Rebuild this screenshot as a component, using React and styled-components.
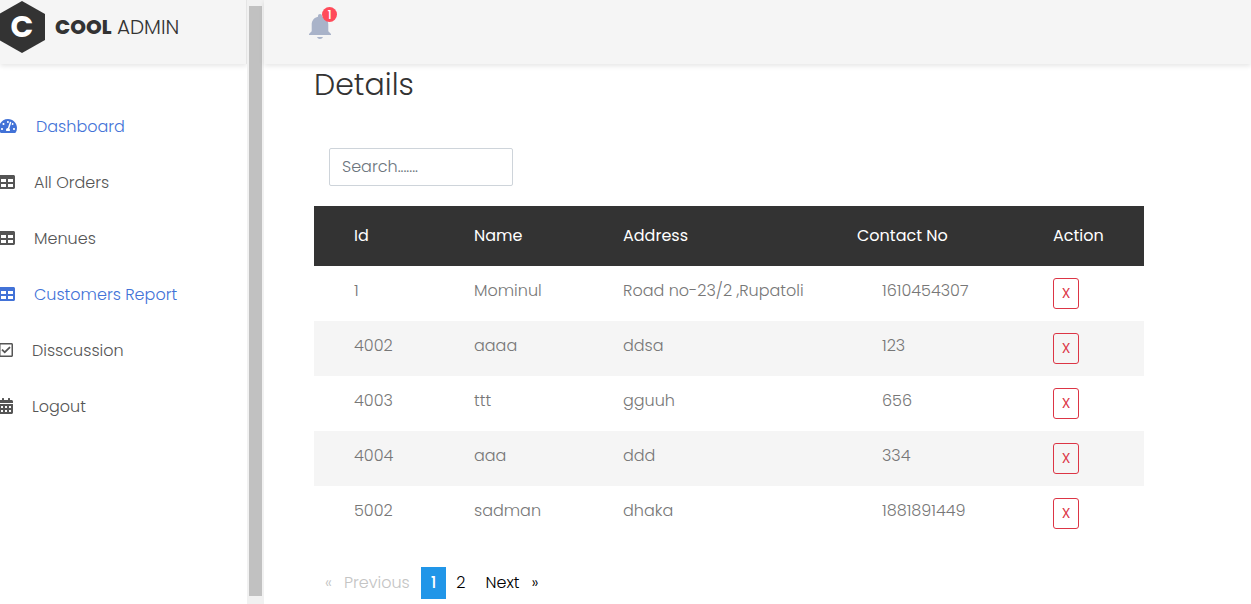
import React, { useState } from "react";
import styled, { createGlobalStyle } from "styled-components";
import { FaTachometerAlt, FaTable, FaRegCheckSquare, FaCalendarAlt } from "react-icons/fa";

const GlobalStyle = createGlobalStyle`
  *, *::before, *::after { box-sizing: border-box; }
  body {
    margin: 0;
    background: #fff;
    color: #333;
    font-family: Poppins, Inter, "Liberation Sans", sans-serif;
    font-size: 16px;
    font-weight: 300;
    line-height: 26px;
  }
  button, input { font: inherit; }
`;

const Page = styled.div`
  display: flex;
  height: 100vh;
  overflow: hidden;
`;

const Sidebar = styled.aside`
  flex: 0 0 247px;
  display: flex;
  flex-direction: column;
`;

const Brand = styled.a`
  display: flex;
  align-items: center;
  gap: 10px;
  height: 64px;
  flex: none;
  padding-bottom: 10px;
  background: #f5f5f5;
  border-right: 1px solid #e5e5e5;
  box-shadow: 0 2px 5px rgba(0, 0, 0, 0.1);
  color: #333;
  text-decoration: none;
`;

const Hexagon = styled.svg`
  display: block;
  width: 45px;
  height: 52px;
`;

const HexagonLetter = styled.text`
  fill: #fff;
  font-size: 30px;
  font-weight: 700;
  text-anchor: middle;
`;

const BrandName = styled.span`
  font-size: 20px;
  line-height: 28px;
  strong { font-weight: 800; }
`;

const Menu = styled.ul`
  display: flex;
  flex-direction: column;
  gap: 30px;
  margin: 0 0 0 -1px;
  padding: 50px 0 0;
  list-style: none;
`;

const MenuLink = styled.a`
  display: flex;
  align-items: center;
  gap: 19px;
  color: ${(p) => (p.$active ? "#4272d7" : "#555")};
  text-decoration: none;
  svg {
    flex: none;
    width: ${(p) => p.$iconWidth}px;
    height: 16px;
    margin-bottom: 2px;
  }
`;

const ScrollTrack = styled.div`
  flex: 0 0 17px;
  padding: 6px 2px 8px;
  background: #f1f1f1;
`;

const ScrollThumb = styled.div`
  height: 100%;
  background: #c1c1c1;
`;

const Content = styled.div`
  flex: 1;
  min-width: 0;
`;

const Header = styled.header`
  display: flex;
  align-items: flex-start;
  height: 64px;
  padding: 12px 44px;
  background: #f5f5f5;
  box-shadow: 0 2px 5px rgba(0, 0, 0, 0.1);
`;

const BellButton = styled.button`
  position: relative;
  padding: 0;
  border: 0;
  background: none;
  color: #a9b3c9;
  svg { display: block; width: 24px; height: 28px; }
`;

const Badge = styled.span`
  position: absolute;
  top: -5px;
  right: -5px;
  width: 15px;
  height: 15px;
  border-radius: 50%;
  background: #ff4b5a;
  color: #fff;
  font-size: 12px;
  font-weight: 500;
  line-height: 16px;
  text-align: center;
`;

const Main = styled.main`
  padding: 0 107px 0 50px;
`;

const Title = styled.h2`
  margin: 0;
  font-size: 30px;
  font-weight: 300;
  line-height: 42px;
`;

const SearchInput = styled.input`
  display: block;
  width: 184px;
  height: 38px;
  margin: 42px 15px 20px;
  padding: 5px 12px 7px;
  border: 1px solid #ced4da;
  border-radius: 2px;
  background: #fff;
  line-height: 24px;
  &::placeholder { color: #6c757d; opacity: 1; }
`;

const DataTable = styled.table`
  width: 100%;
  table-layout: fixed;
  border-collapse: collapse;
  text-align: left;
`;

const HeadCell = styled.th`
  height: 60px;
  padding: 0;
  background: #333;
  color: #fff;
  font-weight: 400;
  white-space: nowrap;
  &:first-child { padding-left: 40px; }
`;

const Row = styled.tr`
  &:nth-child(even) { background: #f5f5f5; }
`;

const Cell = styled.td`
  height: 55px;
  padding: 12px 0 12px ${(p) => (p.$indent ? "25px" : "0")};
  color: #777;
  vertical-align: top;
  white-space: nowrap;
  &:first-child { padding-left: 40px; }
`;

const DeleteButton = styled.button`
  display: block;
  width: 26px;
  height: 31px;
  padding: 0;
  border: 1px solid #dc3545;
  border-radius: 3px;
  background: transparent;
  color: #dc3545;
  font-size: 14px;
  font-weight: 400;
  line-height: 21px;
`;

const Pagination = styled.nav`
  display: flex;
  margin-top: 26px;
`;

const PageButton = styled.button`
  display: flex;
  align-items: center;
  justify-content: center;
  gap: 12px;
  height: 32px;
  padding: 0 ${(p) => (p.disabled ? "11px" : "10px")};
  border: 0;
  background: ${(p) => (p.$current ? "#2196e8" : "none")};
  color: ${(p) => (p.$current ? "#fff" : p.disabled ? "#c4c4c4" : "#000")};
  font-weight: ${(p) => (p.$current ? 500 : 300)};
`;

const MENU = [
  { label: "Dashboard", Icon: FaTachometerAlt, iconWidth: 18, active: true },
  { label: "All Orders", Icon: FaTable, iconWidth: 16 },
  { label: "Menues", Icon: FaTable, iconWidth: 16 },
  { label: "Customers Report", Icon: FaTable, iconWidth: 16, active: true },
  { label: "Disscussion", Icon: FaRegCheckSquare, iconWidth: 14 },
  { label: "Logout", Icon: FaCalendarAlt, iconWidth: 14 },
];

const COLUMNS = [
  { label: "Id", width: 160 },
  { label: "Name", width: 149 },
  { label: "Address", width: 234 },
  { label: "Contact No", width: 196 },
  { label: "Action", width: 91 },
];

const CUSTOMERS = [
  { id: 1, name: "Mominul", address: "Road no-23/2 ,Rupatoli", contact: "1610454307" },
  { id: 4002, name: "aaaa", address: "ddsa", contact: "123" },
  { id: 4003, name: "ttt", address: "gguuh", contact: "656" },
  { id: 4004, name: "aaa", address: "ddd", contact: "334" },
  { id: 5002, name: "sadman", address: "dhaka", contact: "1881891449" },
];

export default function App() {
  const [query, setQuery] = useState("");
  return (
    <>
      <GlobalStyle />
      <Page>
        <Sidebar>
          <Brand href="#">
            <Hexagon viewBox="0 0 45 52" aria-hidden="true">
              <path d="M22 0 45 13V39L22 52 -1 39V13Z" fill="#333" />
              <HexagonLetter x="22" y="36">C</HexagonLetter>
            </Hexagon>
            <BrandName><strong>COOL</strong> ADMIN</BrandName>
          </Brand>
          <nav>
            <Menu>
              {MENU.map(({ label, Icon, iconWidth, active }) => (
                <li key={label}>
                  <MenuLink href="#" $active={active} $iconWidth={iconWidth}><Icon />{label}</MenuLink>
                </li>
              ))}
            </Menu>
          </nav>
        </Sidebar>
        <ScrollTrack><ScrollThumb /></ScrollTrack>
        <Content>
          <Header>
            <BellButton type="button" aria-label="Notifications">
              <svg viewBox="0 0 24 28" fill="currentColor" aria-hidden="true">
                <path d="M12 2c1.200 0 2 .8 2 2v.8c4 1 6.300 3.800 6.300 8v6.400L23 22v1H1v-1l2.700-2.800v-6.400c0-4.200 2.300-7 6.300-8V4c0-1.200.8-2 2-2zM9 25h6c-.5 1.300-1.600 2-3 2s-2.500-.7-3-2z" />
              </svg>
              <Badge>1</Badge>
            </BellButton>
          </Header>
          <Main>
            <Title>Details</Title>
            <SearchInput
              type="text"
              aria-label="Search"
              placeholder="Search......."
              value={query}
              onChange={(e) => setQuery(e.target.value)}
            />
            <DataTable>
              <colgroup>
                {COLUMNS.map((c) => <col key={c.label} width={c.width} />)}
              </colgroup>
              <thead>
                <tr>{COLUMNS.map((c) => <HeadCell key={c.label} scope="col">{c.label}</HeadCell>)}</tr>
              </thead>
              <tbody>
                {CUSTOMERS.map((c) => (
                  <Row key={c.id}>
                    <Cell>{c.id}</Cell>
                    <Cell>{c.name}</Cell>
                    <Cell>{c.address}</Cell>
                    <Cell $indent>{c.contact}</Cell>
                    <Cell><DeleteButton type="button">X</DeleteButton></Cell>
                  </Row>
                ))}
              </tbody>
            </DataTable>
            <Pagination aria-label="Pages">
              <PageButton disabled><span>«</span>Previous</PageButton>
              <PageButton $current>1</PageButton>
              <PageButton>2</PageButton>
              <PageButton>Next<span>»</span></PageButton>
            </Pagination>
          </Main>
        </Content>
      </Page>
    </>
  );
}
